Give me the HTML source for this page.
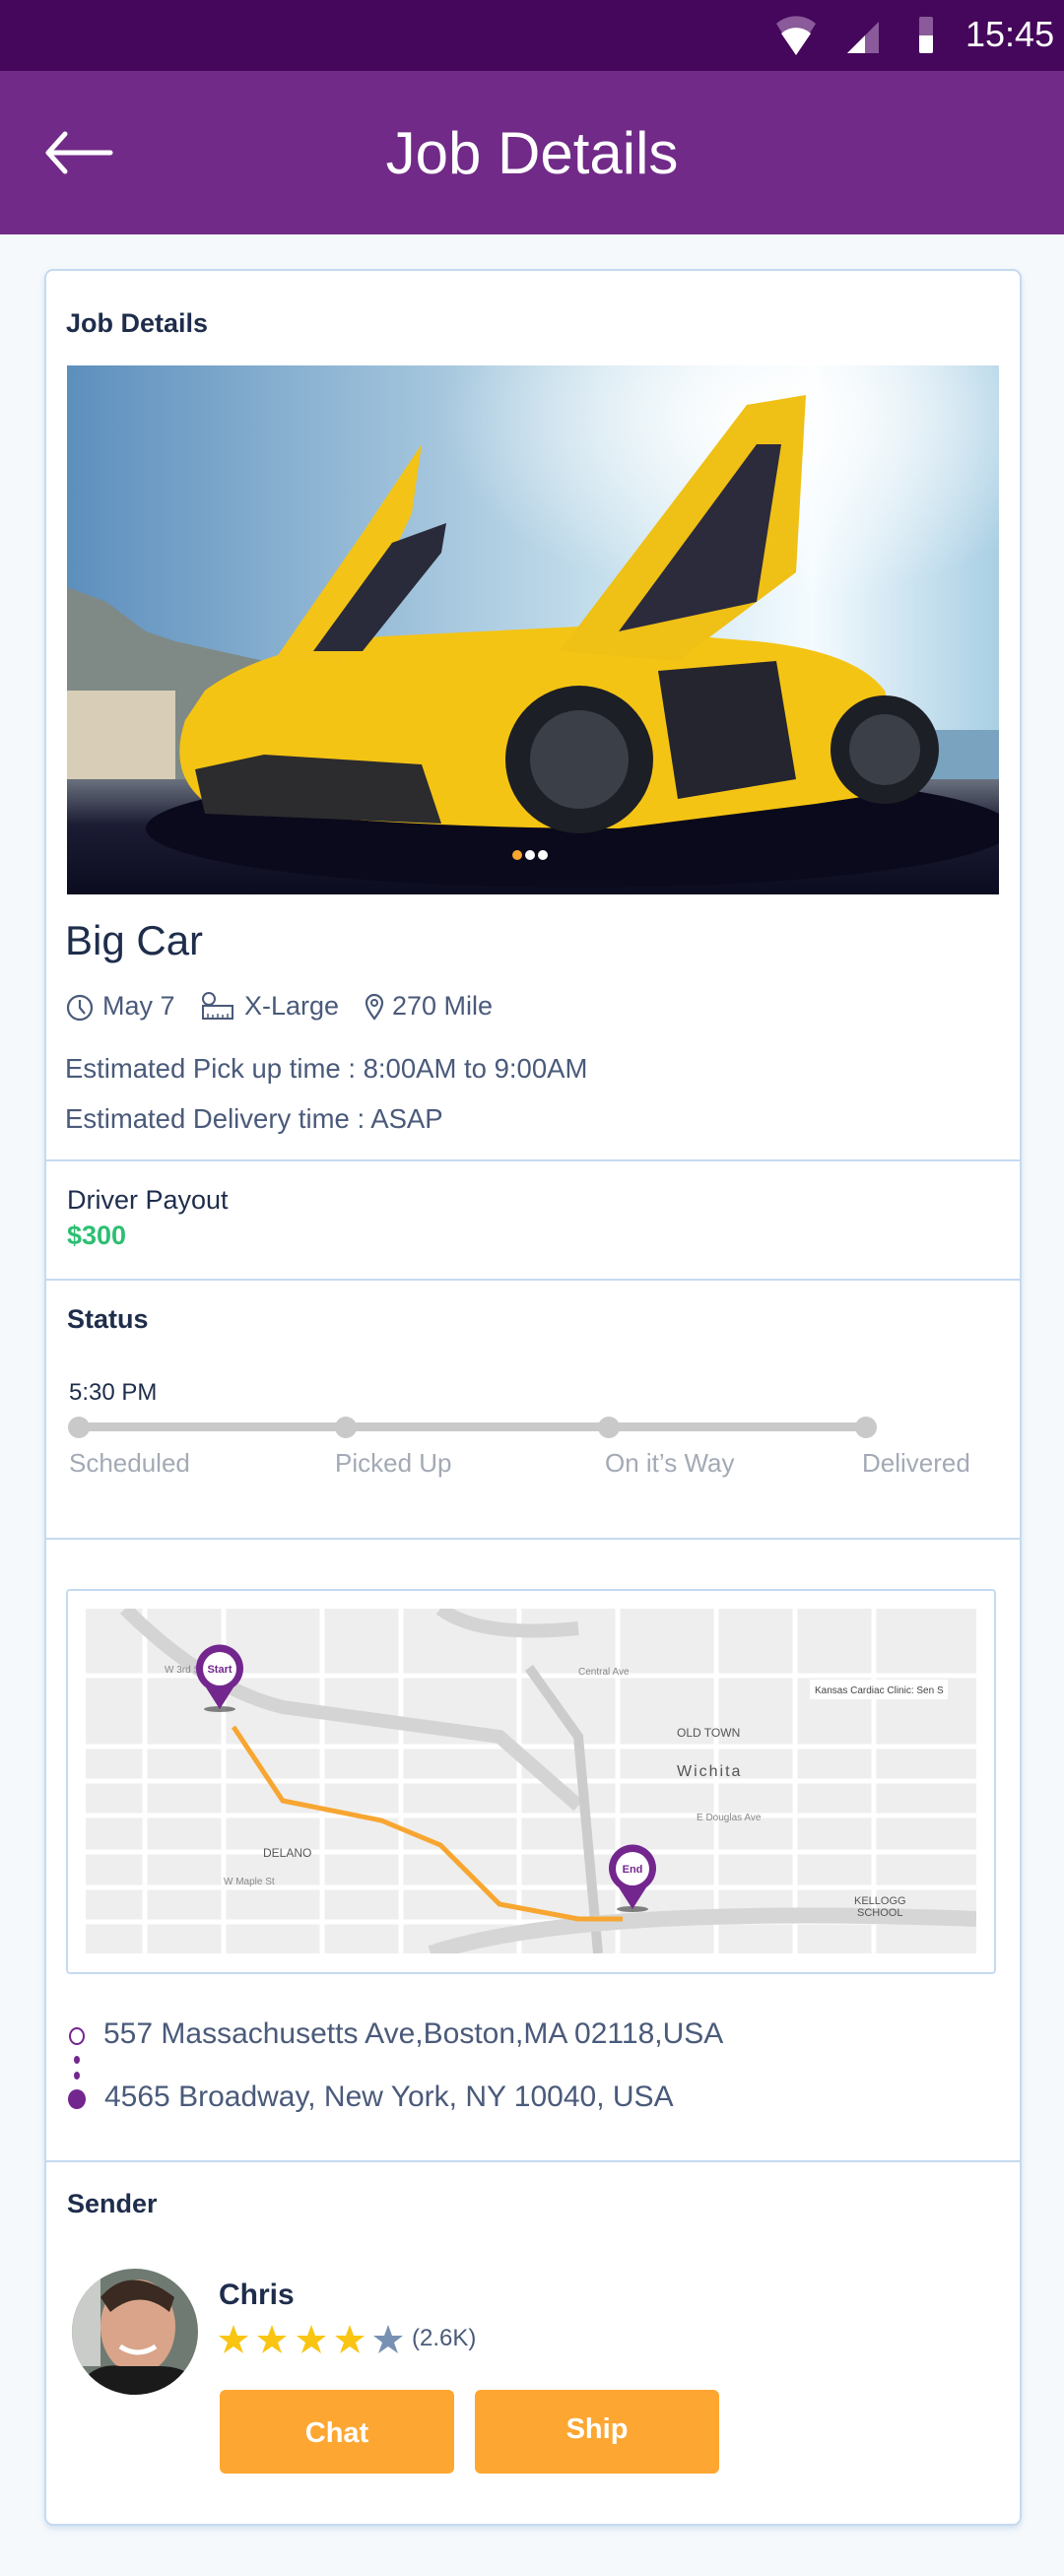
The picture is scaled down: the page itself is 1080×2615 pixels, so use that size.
<!DOCTYPE html>
<html><head><meta charset="utf-8"><style>
*{margin:0;padding:0;box-sizing:border-box}
body{width:1080px;height:2615px;background:#f5f9fc;font-family:"Liberation Sans",sans-serif;position:relative;overflow:hidden}
.a{position:absolute;white-space:nowrap}
.dk{color:#1e2d4b}
.gy{color:#4a5a7a}
.hr{position:absolute;left:45px;width:992px;height:2px;background:#c5daf0}
</style></head><body>
<div class="a" style="left:0;top:0;width:1080px;height:72px;background:#45075b"></div>
<svg class="a" style="left:785px;top:16px" width="50" height="42" viewBox="0 0 50 42"><path d="M3 8 A30 30 0 0 1 43 8 L23 40Z" fill="#8a5a9a"/><path d="M8 18 A22 22 0 0 1 38 18 L23 40Z" fill="#fff"/></svg>
<svg class="a" style="left:858px;top:20px" width="36" height="36"><path d="M2 34 L34 2 V34Z" fill="#8a5a9a"/><path d="M2 34 L20 16 V34Z" fill="#fff"/></svg>
<div class="a" style="left:933px;top:17px;width:14px;height:37px;background:#8a5a9a;border-radius:2px"></div>
<div class="a" style="left:933px;top:36px;width:14px;height:18px;background:#fff;border-radius:0 0 2px 2px"></div>
<div class="a" style="left:980px;top:14px;font-size:36px;color:#fff">15:45</div>
<div class="a" style="left:0;top:72px;width:1080px;height:166px;background:#712a88"></div>
<svg class="a" style="left:44px;top:132px" width="72" height="46"><path d="M68 23 H6 M22 4 L5 23 L22 42" stroke="#fff" stroke-width="5" fill="none" stroke-linecap="round" stroke-linejoin="round"/></svg>
<div class="a" style="left:0;width:1080px;text-align:center;top:121px;font-size:60px;color:#fff">Job Details</div>

<div class="a" style="left:45px;top:273px;width:992px;height:2291px;background:#fff;border:2px solid #c5daf0;border-radius:9px;box-shadow:0 3px 6px rgba(160,190,220,.4)"></div>
<div class="a dk" style="left:67px;top:313px;font-size:27px;font-weight:bold">Job Details</div>

<svg class="a" style="left:68px;top:371px" width="946" height="537" viewBox="0 0 946 537">
<defs><linearGradient id="sky" x1="0" y1="0" x2="1" y2="0"><stop offset="0" stop-color="#5d8fbd"/><stop offset=".6" stop-color="#c9e2ee"/><stop offset=".8" stop-color="#f4fbff"/><stop offset="1" stop-color="#a9cfe4"/></linearGradient>
<radialGradient id="sun" cx=".75" cy=".1" r=".35"><stop offset="0" stop-color="#fff"/><stop offset="1" stop-color="#fff" stop-opacity="0"/></radialGradient>
<linearGradient id="grd" x1="0" y1="0" x2="0" y2="1"><stop offset="0" stop-color="#6a717e"/><stop offset=".4" stop-color="#1b1c33"/><stop offset="1" stop-color="#0c0c20"/></linearGradient></defs>
<rect width="946" height="537" fill="url(#sky)"/><rect width="946" height="537" fill="url(#sun)"/>
<path d="M0 225 L40 240 L80 270 L110 280 L200 300 L200 420 L0 420Z" fill="#7f8a86"/>
<rect x="0" y="330" width="110" height="90" fill="#d8cdb7"/>
<rect x="840" y="370" width="106" height="50" fill="#7aa3c0"/>
<rect x="0" y="420" width="946" height="117" fill="url(#grd)"/>
<ellipse cx="520" cy="470" rx="440" ry="60" fill="#0b0a1c"/>
<path d="M140 330 Q200 285 320 275 L520 265 L700 280 Q800 290 830 330 L860 430 L760 445 L560 470 Q360 470 150 450 Q100 420 120 360Z" fill="#f4c414"/>
<path d="M210 300 L300 170 L360 80 L350 150 L280 300Z" fill="#f3c317"/>
<path d="M250 290 L330 180 L385 160 L380 190 L300 290Z" fill="#2a2b3a"/>
<path d="M500 290 L690 40 L750 30 L740 210 L620 300Z" fill="#efc015"/>
<path d="M560 270 L700 80 L725 80 L700 240Z" fill="#2b2b3c"/>
<path d="M130 410 L200 395 L360 405 L380 465 L140 455Z" fill="#2c2c2e"/>
<circle cx="520" cy="400" r="75" fill="#1d1f26"/><circle cx="520" cy="400" r="50" fill="#3b3f48"/>
<circle cx="830" cy="390" r="55" fill="#1d1f26"/><circle cx="830" cy="390" r="36" fill="#3b3f48"/>
<path d="M600 310 L720 300 L740 420 L620 440Z" fill="#25252f"/>
<circle cx="457" cy="497" r="5" fill="#f7a631"/><circle cx="470" cy="497" r="5" fill="#fff"/><circle cx="483" cy="497" r="5" fill="#fff"/>
</svg>

<div class="a dk" style="left:66px;top:931px;font-size:42px">Big Car</div>
<svg class="a" style="left:67px;top:1008px" width="30" height="30"><circle cx="14" cy="15" r="12" stroke="#4a5a7a" stroke-width="2.2" fill="none"/><path d="M14 7 V15 L19 21" stroke="#4a5a7a" stroke-width="2.2" fill="none"/></svg>
<div class="a gy" style="left:104px;top:1006px;font-size:27px">May 7</div>
<svg class="a" style="left:203px;top:1006px" width="36" height="32"><circle cx="9" cy="8" r="6" stroke="#4a5a7a" stroke-width="2" fill="none"/><rect x="3" y="15" width="30" height="13" stroke="#4a5a7a" stroke-width="2" fill="none"/><path d="M8 28v-5M13 28v-4M18 28v-5M23 28v-4M28 28v-5" stroke="#4a5a7a" stroke-width="1.5"/></svg>
<div class="a gy" style="left:248px;top:1006px;font-size:27px">X-Large</div>
<svg class="a" style="left:369px;top:1007px" width="22" height="30"><path d="M11 27 C4 18 3 14 3 11 A8 8 0 0 1 19 11 C19 14 18 18 11 27Z" stroke="#4a5a7a" stroke-width="2.2" fill="none"/><circle cx="11" cy="11" r="3" stroke="#4a5a7a" stroke-width="2" fill="none"/></svg>
<div class="a gy" style="left:398px;top:1006px;font-size:27px">270 Mile</div>
<div class="a gy" style="left:66px;top:1069px;font-size:27.5px">Estimated Pick up time : 8:00AM to 9:00AM</div>
<div class="a gy" style="left:66px;top:1120px;font-size:27.5px">Estimated Delivery time : ASAP</div>
<div class="hr" style="top:1177px"></div>
<div class="a dk" style="left:68px;top:1203px;font-size:27px">Driver Payout</div>
<div class="a" style="left:68px;top:1239px;font-size:27px;font-weight:bold;color:#2cbf72">$300</div>
<div class="hr" style="top:1298px"></div>
<div class="a dk" style="left:68px;top:1324px;font-size:27px;font-weight:bold">Status</div>
<div class="a dk" style="left:70px;top:1400px;font-size:24px">5:30 PM</div>
<div class="a" style="left:80px;top:1444px;width:800px;height:9px;background:#c9c9c9"></div>
<div class="a" style="left:69px;top:1438px;width:22px;height:22px;border-radius:50%;background:#c9c9c9"></div>
<div class="a" style="left:340px;top:1438px;width:22px;height:22px;border-radius:50%;background:#c9c9c9"></div>
<div class="a" style="left:607px;top:1438px;width:22px;height:22px;border-radius:50%;background:#c9c9c9"></div>
<div class="a" style="left:868px;top:1438px;width:22px;height:22px;border-radius:50%;background:#c9c9c9"></div>
<div class="a" style="left:70px;top:1470px;font-size:26px;color:#a3aab5">Scheduled</div>
<div class="a" style="left:340px;top:1470px;font-size:26px;color:#a3aab5">Picked Up</div>
<div class="a" style="left:614px;top:1470px;font-size:26px;color:#a3aab5">On it’s Way</div>
<div class="a" style="left:875px;top:1470px;font-size:26px;color:#a3aab5">Delivered</div>
<div class="hr" style="top:1561px"></div>

<div class="a" style="left:67px;top:1613px;width:944px;height:391px;border:2px solid #c5daf0;border-radius:4px"></div>
<svg class="a" style="left:87px;top:1633px" width="904" height="350" viewBox="0 0 904 350" font-family="Liberation Sans" font-size="10" fill="#888">
<rect width="904" height="350" fill="#eeeeee"/>
<g stroke="#fff" stroke-width="5" fill="none">
<path d="M0 68 H904 M0 140 H904 M0 175 H904 M0 210 H904 M0 247 H904 M0 283 H904 M0 318 H904"/>
<path d="M60 0 V350 M140 0 V350 M240 0 V350 M320 0 V350 M440 0 V350 M540 0 V350 M640 0 V350 M720 0 V350 M800 0 V350"/>
</g>
<path d="M40 0 Q120 80 200 100 L420 130 L500 200" stroke="#d4d4d4" stroke-width="14" fill="none"/>
<path d="M450 60 L500 130 L520 350" stroke="#cccccc" stroke-width="10" fill="none"/>
<path d="M350 350 Q500 300 904 315" stroke="#d6d6d6" stroke-width="16" fill="none"/>
<path d="M360 0 Q400 30 500 20" stroke="#d4d4d4" stroke-width="14" fill="none"/>
<path d="M150 120 L200 195 L300 215 L360 240 L420 300 L500 315 L545 315" stroke="#f7a631" stroke-width="5" fill="none"/>
<text x="600" y="170" font-size="16" fill="#555" letter-spacing="2">Wichita</text>
<text x="600" y="130" font-size="12" fill="#555">OLD TOWN</text>
<text x="180" y="252" font-size="12" fill="#555">DELANO</text>
<text x="780" y="300" font-size="11" fill="#555">KELLOGG</text>
<text x="783" y="312" font-size="11" fill="#555">SCHOOL</text>
<rect x="735" y="72" width="140" height="20" fill="#fff"/><text x="740" y="86" fill="#444">Kansas Cardiac Clinic: Sen S</text>
<text x="80" y="65">W 3rd St N</text><text x="500" y="67">Central Ave</text><text x="620" y="215">E Douglas Ave</text><text x="140" y="280">W Maple St</text>
<ellipse cx="136" cy="102" rx="16" ry="3" fill="#333" opacity=".6"/>
<path d="M136 102 L122 80 A24 24 0 1 1 150 80Z" fill="#73268e"/><circle cx="136" cy="61" r="17" fill="#fff"/>
<text x="136" y="65" text-anchor="middle" font-size="11" font-weight="bold" fill="#73268e">Start</text>
<ellipse cx="555" cy="305" rx="16" ry="3" fill="#333" opacity=".6"/>
<path d="M555 305 L541 283 A24 24 0 1 1 569 283Z" fill="#73268e"/><circle cx="555" cy="264" r="17" fill="#fff"/>
<text x="555" y="268" text-anchor="middle" font-size="11" font-weight="bold" fill="#73268e">End</text>
</svg>

<div class="a" style="left:70px;top:2058px;width:16px;height:18px;border:2px solid #73268e;border-radius:50%"></div>
<div class="a" style="left:75px;top:2087px;width:6px;height:8px;border-radius:50%;background:#73268e"></div>
<div class="a" style="left:75px;top:2103px;width:6px;height:8px;border-radius:50%;background:#73268e"></div>
<div class="a" style="left:69px;top:2121px;width:18px;height:20px;border-radius:50%;background:#73268e"></div>
<div class="a gy" style="left:105px;top:2048px;font-size:30px">557 Massachusetts Ave,Boston,MA 02118,USA</div>
<div class="a gy" style="left:106px;top:2112px;font-size:30px">4565 Broadway, New York, NY 10040, USA</div>
<div class="hr" style="top:2193px"></div>
<div class="a dk" style="left:68px;top:2222px;font-size:27px;font-weight:bold">Sender</div>
<svg class="a" style="left:72px;top:2302px" width="130" height="130" viewBox="0 0 130 130"><defs><clipPath id="c"><ellipse cx="65" cy="65" rx="64" ry="64"/></clipPath></defs><g clip-path="url(#c)"><rect width="130" height="130" fill="#6f7a72"/><rect x="0" y="10" width="30" height="90" fill="#c9ccc8"/><ellipse cx="68" cy="60" rx="38" ry="48" fill="#d9a48a"/><path d="M30 30 Q60 -5 105 30 L100 45 Q70 20 40 45Z" fill="#3a2a22"/><path d="M0 130 Q20 95 50 100 L90 100 Q120 100 130 120 V130Z" fill="#1a1a1a"/><path d="M50 80 Q68 92 86 80" stroke="#fff" stroke-width="5" fill="none"/></g></svg>
<div class="a dk" style="left:222px;top:2313px;font-size:30px;font-weight:bold">Chris</div>
<svg class="a" style="left:222px;top:2358px" width="190" height="34" viewBox="0 0 190 34">
<g id="s"><path d="M15 2 L19 13 L30 13 L21 20 L25 31 L15 24 L5 31 L9 20 L0 13 L11 13Z" fill="#f9c512"/></g>
<use href="#s" x="39"/><use href="#s" x="79"/><use href="#s" x="118"/>
<path d="M172 2 L176 13 L187 13 L178 20 L182 31 L172 24 L162 31 L166 20 L157 13 L168 13Z" fill="#7891b2"/></svg>
<div class="a gy" style="left:418px;top:2360px;font-size:24px">(2.6K)</div>
<div class="a" style="left:223px;top:2426px;width:238px;height:85px;background:#fda732;border-radius:6px;color:#fff;font-size:29px;font-weight:bold;text-align:center;line-height:88px">Chat</div>
<div class="a" style="left:482px;top:2426px;width:248px;height:85px;background:#fda732;border-radius:6px;color:#fff;font-size:29px;font-weight:bold;text-align:center;line-height:80px">Ship</div>
</body></html>
